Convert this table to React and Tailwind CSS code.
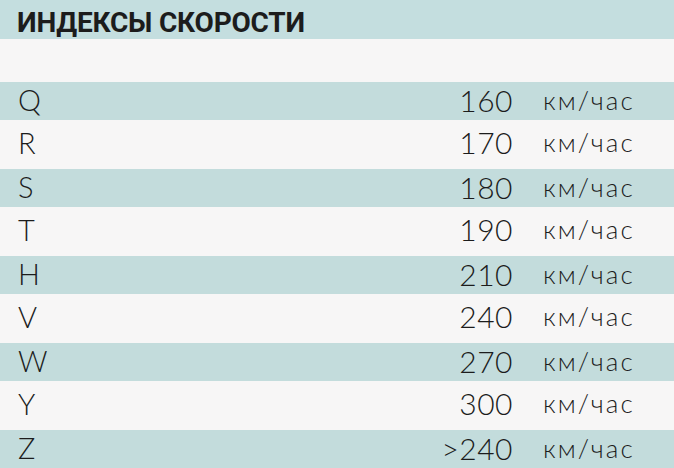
import React from "react";

const rows = [
  ["Q", "160"],
  ["R", "170"],
  ["S", "180"],
  ["T", "190"],
  ["H", "210"],
  ["V", "240"],
  ["W", "270"],
  ["Y", "300"],
  ["Z", ">240"],
];

export default function App() {
  return (
    <div className="w-[674px] h-[468px] overflow-hidden bg-[#f7f6f6] text-[#1c1c1c]">
      <div
        className="h-[39px] bg-[#c4dedf] flex items-end pl-[17px] pb-[2px] text-[28px] font-bold leading-none"
        style={{ fontFamily: "Roboto, 'Liberation Sans', sans-serif" }}
      >
        <span className="tracking-[-0.2px]">ИНДЕКСЫ СКОРОСТИ</span>
      </div>
      <div className="h-[43px] bg-[#f7f6f6]" />
      <div style={{ fontFamily: "Lato, 'Noto Sans', sans-serif" }}>
        {rows.map(([l, n], i) => (
          <div
            key={l}
            className={
              i % 2 === 0
                ? "h-[38px] bg-[#c3dcdc] flex items-center pb-[3px]"
                : "h-[49px] bg-[#f7f6f6] flex items-center pb-[5px]"
            }
          >
            <div className="flex-1 pl-[18px] text-[29px] font-light leading-none">{l}</div>
            <div className="text-right text-[30px] font-light leading-none pr-[1px] tracking-[0.5px]">{n}</div>
            <div className="w-[131px] ml-[29px] text-[26px] font-light leading-none tracking-[2px]">км/час</div>
          </div>
        ))}
      </div>
    </div>
  );
}
